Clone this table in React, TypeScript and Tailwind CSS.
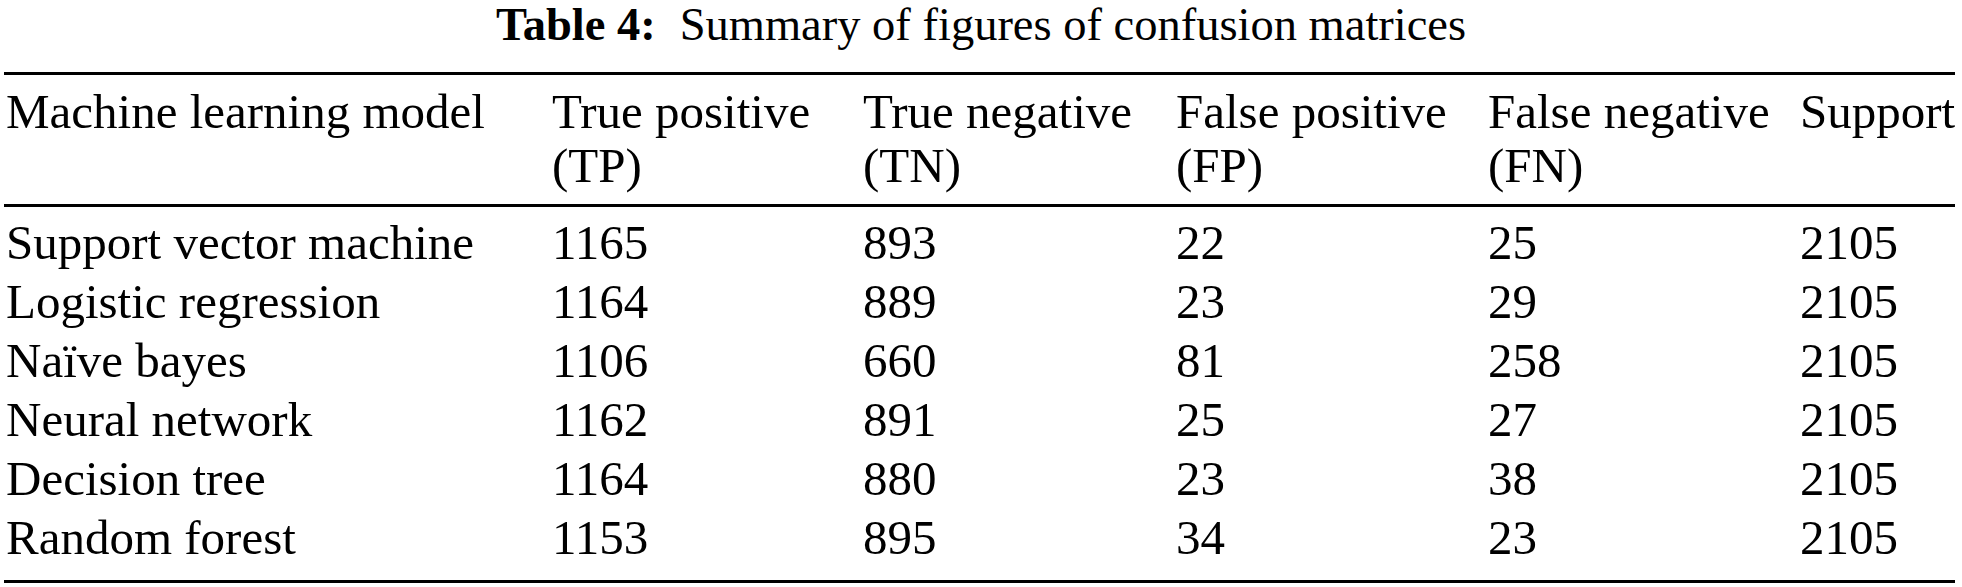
const headers = [
  ['Machine learning model'],
  ['True positive', '(TP)'],
  ['True negative', '(TN)'],
  ['False positive', '(FP)'],
  ['False negative', '(FN)'],
  ['Support'],
];

const rows = [
  ['Support vector machine', '1165', '893', '22', '25', '2105'],
  ['Logistic regression', '1164', '889', '23', '29', '2105'],
  ['Naïve bayes', '1106', '660', '81', '258', '2105'],
  ['Neural network', '1162', '891', '25', '27', '2105'],
  ['Decision tree', '1164', '880', '23', '38', '2105'],
  ['Random forest', '1153', '895', '34', '23', '2105'],
];

const cols = 'grid grid-cols-[546px_311px_313px_312px_312px_1fr]';

export default function App() {
  return (
    <div className="w-[1962px] h-[587px] bg-white text-black font-['Liberation_Serif'] overflow-hidden">
      <h1 className="pt-[2px] text-center text-[46.5px] leading-[46px] font-normal">
        <span className="font-bold">Table 4:</span>
        <span className="ml-[24px]">Summary of figures of confusion matrices</span>
      </h1>

      <div className="mt-[24px] mx-[4px] w-[1951px]">
        <div className="h-[3px] bg-black" />
        <div className={`${cols} pl-[2px] pt-[10px] pb-[11px] text-[49px] leading-[54px]`}>
          {headers.map((h, i) => (
            <div key={i} className="whitespace-nowrap">
              {h.map(line => (
                <div key={line}>{line}</div>
              ))}
            </div>
          ))}
        </div>
        <div className="h-[3px] bg-black" />

        <div className="pl-[2px] pt-[6px] pb-[13px] text-[49px] leading-[59px]">
          {rows.map(r => (
            <div key={r[0]} className={cols}>
              {r.map((c, i) => (
                <div key={i} className="whitespace-nowrap">{c}</div>
              ))}
            </div>
          ))}
        </div>
        <div className="h-[3px] bg-black" />
      </div>
    </div>
  );
}
